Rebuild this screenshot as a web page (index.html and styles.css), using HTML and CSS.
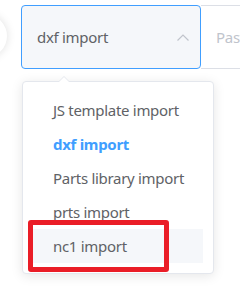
FILE: index.html
```html
<!DOCTYPE html>
<html>
<head>
<meta charset="utf-8">
<link rel="stylesheet" href="styles.css">
</head>
<body>
<div class="page">
  <div class="bubble"></div>
  <div class="bar">
    <div class="select">
      <span class="select-text">dxf import</span>
      <svg class="chev" width="12" height="7" viewBox="0 0 12 7"><path d="M0.5 6.5 L6 1 L11.5 6.5" fill="none" stroke="#c0c4cc" stroke-width="1.2"/></svg>
    </div>
    <div class="input"><span class="ph">Paste</span></div>
  </div>
  <div class="dropdown">
    <div class="arrow"></div>
    <ul class="list">
      <li class="item">JS template import</li>
      <li class="item selected">dxf import</li>
      <li class="item">Parts library import</li>
      <li class="item">prts import</li>
      <li class="item hover">nc1 import</li>
    </ul>
  </div>
  <div class="mark"></div>
</div>
</body>
</html>
```
FILE: styles.css
```css
* { box-sizing: border-box; }
html, body { margin: 0; padding: 0; background: #fff; }
body { font-family: "Noto Sans", "Open Sans", sans-serif; overflow: hidden; }
.page { position: relative; width: 240px; height: 287px; overflow: hidden; }
.bubble {
  position: absolute; left: -33px; top: 15px; width: 40px; height: 42px;
  border-radius: 50%; background: #fff;
  box-shadow: 0 0 10px rgba(0,0,0,0.13);
}
.bar { display: flex; padding: 5px 0 0 21px; }
.select {
  width: 180px; height: 64px; flex: none;
  border: 1px solid #409eff; border-radius: 4px; background: #f5f7fa;
  display: flex; align-items: center; justify-content: space-between;
  padding: 0 11px 0 15px;
}
.select-text { font-size: 15px; letter-spacing: -0.3px; color: #606266; }
.chev { display: block; }
.input {
  flex: 1; height: 64px; border: 1px solid #dcdfe6; border-left: none;
  display: flex; align-items: center; padding-left: 15px;
}
.ph { font-size: 15px; letter-spacing: -0.3px; color: #c0c4cc; }
.dropdown {
  position: absolute; left: 22px; top: 81px; width: 192px; height: 193px;
  background: #fff; border: 1px solid #e4e7ed; border-radius: 4px;
  box-shadow: 0 2px 12px rgba(0,0,0,0.1);
  padding: 11px 0;
}
.arrow {
  position: absolute; left: 35px; top: -6px; width: 0; height: 0;
  border-left: 6px solid transparent; border-right: 6px solid transparent;
  border-bottom: 6px solid #e4e7ed;
}
.arrow::after {
  content: ""; position: absolute; left: -5px; top: 1px;
  border-left: 5px solid transparent; border-right: 5px solid transparent;
  border-bottom: 5px solid #fff;
}
.list { list-style: none; margin: 0; padding: 0; }
.item {
  height: 34px; line-height: 34px; margin: 0 10px 0 5px; padding-left: 25px;
  font-size: 15px; letter-spacing: -0.3px; color: #606266; white-space: nowrap;
}
.item.selected { color: #409eff; font-weight: 700; }
.item.hover { background: #f5f7fa; }
.mark {
  position: absolute; left: 28px; top: 220px; width: 141px; height: 52px;
  border: 5px solid #ea1d27; border-radius: 3px;
}
```
